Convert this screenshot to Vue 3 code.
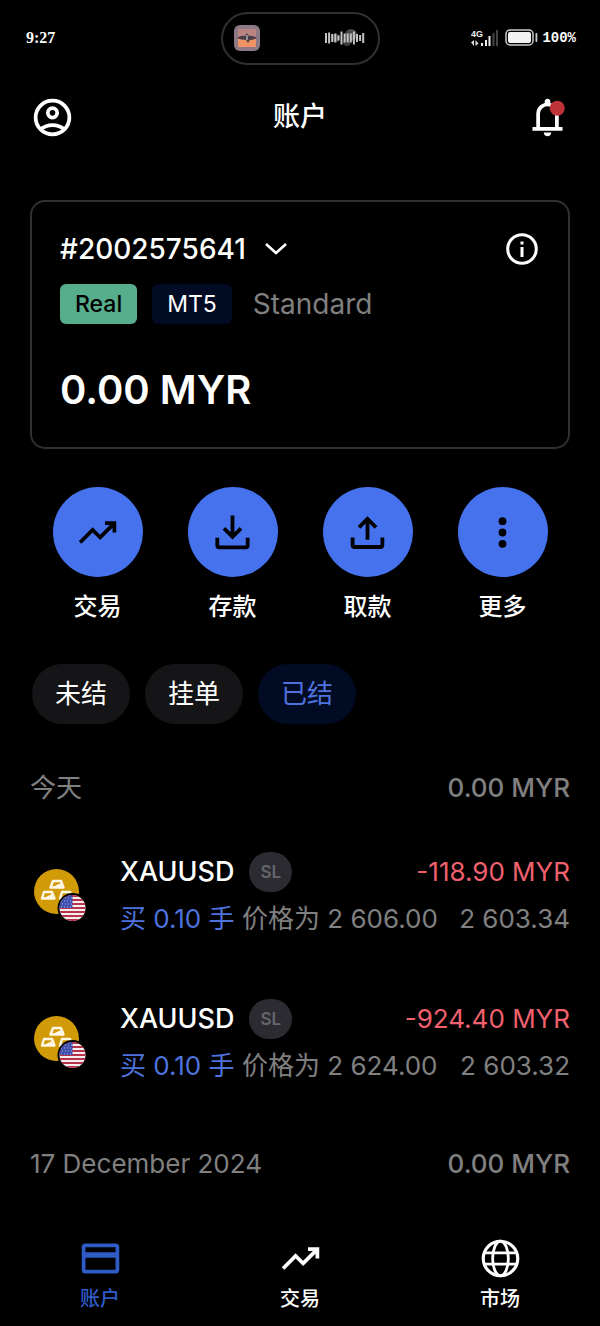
<script setup>
import { ref } from 'vue'

const actions = [
  { id: 'trade', label: '交易' },
  { id: 'deposit', label: '存款' },
  { id: 'withdraw', label: '取款' },
  { id: 'more', label: '更多' },
]
const filters = ['未结', '挂单', '已结']
const activeFilter = ref('已结')
const orders = [
  { id: 1, symbol: 'XAUUSD', tag: 'SL', profit: '-118.90 MYR', volume: '买 0.10 手', open: '2 606.00', close: '2 603.34' },
  { id: 2, symbol: 'XAUUSD', tag: 'SL', profit: '-924.40 MYR', volume: '买 0.10 手', open: '2 624.00', close: '2 603.32' },
]
const tabs = [
  { id: 'account', label: '账户' },
  { id: 'trade', label: '交易' },
  { id: 'market', label: '市场' },
]
const activeTab = ref('account')
const wave = [10, 11, 8, 9, 5, 13, 9, 9, 9, 13, 8, 6, 10]
const trend = 'M3.4 18 2 16.6l7.4-7.45 4 4L18.6 8H16V6h6v6h-2V9.4L13.4 16l-4-4Z'
</script>

<template>
  <div class="screen">
    <div class="status">
      <span class="clock">9:27</span>
      <div class="island">
        <svg class="cover" viewBox="0 0 26 26" aria-hidden="true">
          <rect width="26" height="26" rx="6" fill="#8d7a86" />
          <rect x="4" y="4" width="18" height="18" fill="#b98482" />
          <rect x="4" y="14" width="18" height="8" fill="#f09468" />
          <path d="M3 13q4-3 8-2l2-3 2 3q4-1 8 2-4 2-7 2l-2 3-2-3q-5 0-9-2Z" fill="#4b3e49" />
          <path d="M13 10v5" stroke="#ddd" />
        </svg>
        <svg class="wave" viewBox="0 0 40 18" aria-hidden="true">
          <circle cx="26" cy="6" r="6" fill="#4a4a4a" />
          <circle cx="11" cy="9" r="4" fill="#3c3c3c" />
          <circle cx="22" cy="13" r="4" fill="#3c3c3c" />
          <rect v-for="(h, i) in wave" :key="i" :x="i * 3.100" :y="9 - h / 2" width="2" :height="h" fill="#c4c4c4" />
        </svg>
      </div>
      <div class="signals">
        <svg class="cell" viewBox="0 0 28 18" aria-hidden="true">
          <text x="0" y="8" class="net">4G</text>
          <path d="M0 13.5 3 11v6M4.500 11v6l3-2.500Z" fill="#ddd" />
          <rect x="10" y="14" width="2" height="3" fill="#eee" />
          <rect x="14" y="11" width="2" height="6" fill="#eee" />
          <rect x="17.500" y="7" width="2" height="10" fill="#eee" />
          <rect x="21.500" y="4" width="2" height="13" fill="#444" />
          <rect x="25" y="1" width="2" height="16" fill="#444" />
        </svg>
        <svg class="battery" viewBox="0 0 33 18" aria-hidden="true">
          <rect x="1" y="1" width="27" height="15" rx="4" fill="none" stroke="#ccc" stroke-width="1.500" />
          <rect x="3" y="3" width="23" height="11" rx="2" fill="#f2f2f2" />
          <rect x="30.500" y="4" width="1.800" height="9" rx=".8" fill="#ccc" />
        </svg>
        <span class="percent">100%</span>
      </div>
    </div>

    <header class="header">
      <button class="icon-button" aria-label="个人资料">
        <svg class="icon" viewBox="0 0 24 24" fill="none" stroke="#fff" stroke-width="2">
          <circle cx="12" cy="12" r="9" />
          <circle cx="12" cy="9.500" r="2.500" />
          <path d="M5.500 18.400C7.300 16.900 9.500 16 12 16s4.700.9 6.500 2.400" />
        </svg>
      </button>
      <h1>账户</h1>
      <button class="icon-button" aria-label="通知">
        <svg class="icon" viewBox="0 0 24 24" fill="#fff">
          <path d="M4 19v-2h2v-7q0-2.075 1.250-3.688T10.500 4.200v-.7q0-.625.438-1.062T12 2t1.063.438T13.500 3.500v.7q2 .5 3.250 2.113T18 10v7h2v2H4Zm8 3q-.825 0-1.412-.587T10 20h4q0 .825-.587 1.413T12 22Zm-4-5h8v-7q0-1.650-1.175-2.825T12 6T9.175 7.175T8 10v7Z" />
          <circle cx="17.200" cy="7" r="4" fill="#bd3338" />
        </svg>
      </button>
    </header>

    <main>
      <section class="card">
        <div class="card-top">
          <button class="account">
            <span>#2002575641</span>
            <svg class="chevron" viewBox="0 0 24 16" fill="none" stroke="#fff" stroke-width="2.500"><path d="m2 3 10 9L22 3" /></svg>
          </button>
          <button class="info" aria-label="详情">
            <svg class="info-icon" viewBox="0 0 32 32">
              <circle cx="16" cy="16" r="14.300" fill="none" stroke="#fff" stroke-width="3" />
              <path d="M14.500 8.500h3v3h-3zM14.500 14h3v10h-3z" fill="#fff" />
            </svg>
          </button>
        </div>
        <div class="tags">
          <span class="tag real">Real</span>
          <span class="tag platform">MT5</span>
          <span class="plan">Standard</span>
        </div>
        <p class="balance">0.00 MYR</p>
      </section>

      <div class="actions">
        <button v-for="a in actions" :key="a.id" class="action">
          <span class="disc">
            <svg v-if="a.id === 'trade'" class="icon" viewBox="0 0 24 24"><path :d="trend" /></svg>
            <svg v-else-if="a.id === 'deposit'" class="icon" viewBox="0 0 45 45" fill="none" stroke="#000" stroke-width="3.800">
              <path d="M7.300 27.800v7.500q0 2 2 2h26.400q2 0 2-2v-7.500M22.500 5.500V27M14 18.300l8.500 8.500 8.500-8.500" />
            </svg>
            <svg v-else-if="a.id === 'withdraw'" class="icon" viewBox="0 0 45 45" fill="none" stroke="#000" stroke-width="3.800">
              <path d="M7.600 27.500v7.500q0 2 2 2h25.800q2 0 2-2v-7.500M22.500 29.800V9M14 17.400l8.500-8.500 8.500 8.500" />
            </svg>
            <svg v-else class="icon" viewBox="0 0 45 45">
              <circle cx="22.500" cy="11.200" r="3.900" /><circle cx="22.500" cy="22.500" r="3.900" /><circle cx="22.500" cy="33.800" r="3.900" />
            </svg>
          </span>
          <span>{{ a.label }}</span>
        </button>
      </div>

      <div class="filters">
        <button v-for="f in filters" :key="f" class="filter" :class="{ active: f === activeFilter }" @click="activeFilter = f">{{ f }}</button>
      </div>

      <section>
        <div class="day"><h2>今天</h2><span class="total">0.00 MYR</span></div>
        <ul class="orders">
          <li v-for="o in orders" :key="o.id" class="order">
            <svg class="asset" viewBox="0 0 53 53" aria-hidden="true">
              <defs>
                <clipPath :id="'flag' + o.id"><circle cx="38.500" cy="39" r="13" /></clipPath>
              </defs>
              <circle cx="22.500" cy="22.500" r="22.500" fill="#d19a07" />
              <g fill="#d19a07" stroke="#fff8e6" stroke-width="2.400" stroke-linejoin="round">
                <path d="M19 12h8l2.500 6.500H16.500zM10 23h8l2.500 6.500H8zM28 23h8l2.500 6.500H26z" />
              </g>
              <path d="M18.500 18 27 14l1 4.500ZM10 29l8-4 1 4.500Z" fill="#fff8e6" />
              <circle cx="38.500" cy="39" r="15" fill="#000" />
              <g :clip-path="`url(#flag${o.id})`">
                <path fill="#f4eef0" d="M25 26h28v27H25z" />
                <path d="M25 27h28M25 31h28M25 35h28M25 39h28M25 43h28M25 47h28M25 51h28" stroke="#b83349" stroke-width="2" />
                <path fill="#3f4fae" d="M25 26h13.500v13H25z" />
                <path d="M28 29h10M27 32h11M28 35h10M27 38h11" stroke="#aab3e0" stroke-dasharray="1 2" />
              </g>
            </svg>
            <div class="detail">
              <div class="line">
                <span class="symbol">{{ o.symbol }}<span class="sl">{{ o.tag }}</span></span>
                <span class="profit">{{ o.profit }}</span>
              </div>
              <div class="line price">
                <span><span class="volume">{{ o.volume }}</span> 价格为 {{ o.open }}</span>
                <span>{{ o.close }}</span>
              </div>
            </div>
          </li>
        </ul>
      </section>
      <section>
        <div class="day"><h2>17 December 2024</h2><span class="total">0.00 MYR</span></div>
      </section>
    </main>

    <nav class="tabs">
      <button v-for="t in tabs" :key="t.id" class="tab" :class="{ current: t.id === activeTab }" @click="activeTab = t.id">
        <svg v-if="t.id === 'account'" class="icon" viewBox="0 0 24 24" fill="currentColor">
          <path fill-rule="evenodd" d="M4 4h16a2 2 0 0 1 2 2v12a2 2 0 0 1-2 2H4a2 2 0 0 1-2-2V6a2 2 0 0 1 2-2Zm0 2v2.600h16V6ZM4 11.600V18h16v-6.400Z" />
        </svg>
        <svg v-else-if="t.id === 'trade'" class="icon" viewBox="0 0 24 24" fill="currentColor"><path :d="trend" /></svg>
        <svg v-else class="icon" viewBox="0 0 24 24" fill="none" stroke="currentColor" stroke-width="1.500">
          <circle cx="12" cy="12" r="9.200" stroke-width="1.700" />
          <ellipse cx="12" cy="12" rx="4.200" ry="9.200" />
          <path d="M3.500 9h17M3.500 15h17" />
        </svg>
        <span>{{ t.label }}</span>
      </button>
    </nav>
  </div>
</template>

<style>
body { background: #000; }
</style>

<style scoped>
.screen {
  display: flex;
  flex-direction: column;
  min-height: 100vh;
  background: #000;
  color: #fff;
  font-family: Inter, "Noto Sans CJK SC", sans-serif;
  font-size: 26px;
  line-height: 40px;
}
button {
  padding: 0;
  border: 0;
  background: none;
  color: inherit;
  font: inherit;
  cursor: pointer;
}
svg { display: block; }
h1, h2, p, ul { margin: 0; padding: 0; font: inherit; }
.icon { width: 45px; height: 45px; }

.status {
  display: grid;
  grid-template-columns: 1fr auto 1fr;
  align-items: center;
  height: 76px;
  padding: 0 24px;
  font-family: "Liberation Serif", serif;
  font-size: 16px;
  line-height: 20px;
}
.clock { padding-left: 2px; font-weight: bold; }
.island {
  display: flex;
  align-items: center;
  justify-content: space-between;
  box-sizing: border-box;
  width: 159px;
  height: 53px;
  padding: 0 13px 0 11px;
  border: 2px solid #303030;
  border-radius: 27px;
}
.cover { width: 26px; height: 26px; }
.wave { width: 40px; height: 18px; }
.signals { display: flex; align-items: center; justify-content: flex-end; }
.cell { width: 28px; height: 18px; margin-right: 6px; }
.net { fill: #eee; font: bold 9px "Liberation Sans", sans-serif; }
.battery { width: 33px; height: 18px; margin-right: 4px; }
.percent { font-family: "Liberation Mono", monospace; font-size: 14px; font-weight: bold; }

.header {
  display: flex;
  align-items: center;
  justify-content: space-between;
  height: 82px;
  padding: 0 30px;
}
h1 { font-size: 27px; font-weight: 500; }

main { padding: 42px 30px 0; }
.card {
  box-sizing: border-box;
  padding: 27px 30px 28px 28px;
  border: 2px solid #303033;
  border-radius: 15px;
}
.card-top { display: flex; align-items: center; justify-content: space-between; }
.account {
  display: flex;
  align-items: center;
  gap: 18px;
  font-size: 28px;
  font-weight: 500;
}
.chevron { width: 24px; height: 16px; }
.info-icon { width: 32px; height: 32px; }
.tags { display: flex; align-items: center; margin-top: 15px; }
.tag { padding: 0 15px; margin-right: 15px; border-radius: 6px; font-size: 23px; }
.real { background: #57ae8c; color: #000; font-weight: 500; }
.platform { background: #020b24; }
.plan { margin-left: 6px; color: #808080; font-size: 28px; }
.balance { margin-top: 37px; font-size: 40px; font-weight: 600; line-height: 58px; }

.actions { display: grid; grid-template-columns: repeat(4, 1fr); margin-top: 38px; }
.action {
  display: flex;
  flex-direction: column;
  align-items: center;
  gap: 10px;
  font-size: 24px;
  font-weight: 500;
}
.disc {
  display: grid;
  place-items: center;
  width: 90px;
  height: 90px;
  border-radius: 50%;
  background: #4672ee;
}

.filters { display: flex; gap: 15px; margin-top: 37px; padding: 0 2px; }
.filter { height: 60px; padding: 0 23px; border-radius: 30px; background: #151517; }
.filter.active { background: #020b24; color: #4e73df; }

.day { display: flex; justify-content: space-between; color: #808080; }
.filters + section { margin-top: 44px; }
.total { font-weight: 500; }
.orders { list-style: none; }
.order { display: flex; align-items: center; height: 87px; margin: 44px 0 60px; padding-left: 4px; }
.order:last-child { margin-bottom: 58px; }
.asset { flex: none; width: 53px; height: 53px; margin-right: 33px; }
.detail { flex: 1; }
.line { display: flex; align-items: center; justify-content: space-between; height: 47px; white-space: nowrap; }
.symbol { display: flex; align-items: center; gap: 15px; font-size: 27px; font-weight: 500; }
.sl {
  padding: 0 11px;
  border-radius: 20px;
  background: #2b2b31;
  color: #65656a;
  font-size: 17px;
  font-weight: 600;
}
.profit { color: #f0616d; }
.price { color: #808080; }
.volume { color: #4e73df; }

.tabs { display: grid; grid-template-columns: repeat(3, 1fr); margin-top: auto; padding-bottom: 13px; }
.tab {
  display: flex;
  flex-direction: column;
  align-items: center;
  gap: 4px;
  font-size: 20px;
  font-weight: 500;
  line-height: 28px;
}
.tab.current { color: #2f5bc7; }
</style>
